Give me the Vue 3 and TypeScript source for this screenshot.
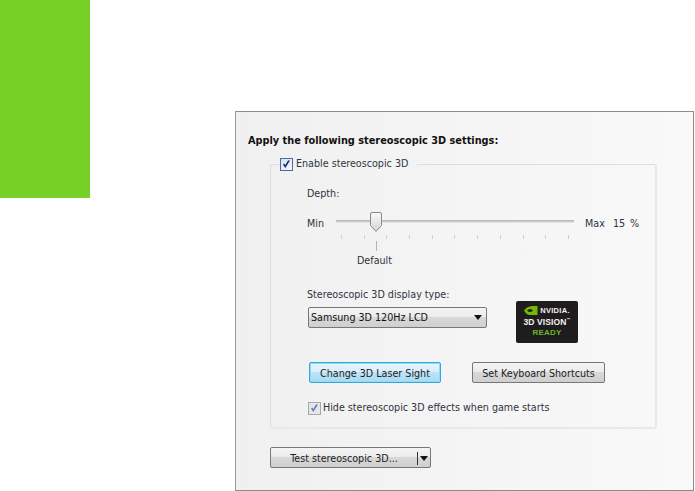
<script setup lang="ts">
const ticks: number[] = Array.from({ length: 11 }, (_, i) => i)
</script>

<template>
  <div class="page">
    <div class="brand"></div>
    <section class="panel">
      <h2 class="title">Apply the following stereoscopic 3D settings:</h2>
      <fieldset class="group">
        <legend class="legend">
          <span class="check"><svg viewBox="0 0 13 13" width="13" height="13"><path d="M3 6.5 L5.3 10 L10 2.6 L8 2.6 L5.2 7.3 L4.4 5.6 Z" fill="#14286e" /></svg></span>
          <span>Enable stereoscopic 3D</span>
        </legend>
        <div class="depth-label">Depth:</div>
        <div class="slider-row">
          <span class="min">Min</span>
          <div class="slider">
            <div class="track"></div>
            <svg class="thumb" viewBox="0 0 12 20" width="12" height="20">
              <defs>
                <linearGradient id="thumbFill" x1="0" y1="0" x2="0" y2="1">
                  <stop offset="0" stop-color="#fafafa" />
                  <stop offset="1" stop-color="#d4d4d4" />
                </linearGradient>
              </defs>
              <path d="M2 .5 H10 Q11.5 .5 11.5 2 V13.5 L6 19.5 L.5 13.5 V2 Q.5 .5 2 .5 Z" fill="url(#thumbFill)" stroke="#8a8a8a" />
            </svg>
            <div class="ticks">
              <i v-for="t in ticks" :key="t" class="tick"></i>
            </div>
            <div class="default-tick"></div>
            <div class="default-label">Default</div>
          </div>
          <span class="max">Max</span>
          <span class="value">15</span>
          <span class="unit">%</span>
        </div>
        <div class="display-row">
          <div class="display-col">
            <div class="display-label">Stereoscopic 3D display type:</div>
            <div class="select">
              <span>Samsung 3D 120Hz LCD</span>
              <i class="arrow"></i>
            </div>
          </div>
          <div class="logo">
            <div class="logo-top">
              <svg viewBox="0 0 14 9" width="14" height="9"><path d="M0 4.5 C3 .5 7 -.5 13.5 0 V9 H6 C3 9 1.5 7 0 4.5 Z" fill="#76b900" /><path d="M3 4.5 C5 2.5 7 2.5 9 4.5 C7 6.5 5 6.5 3 4.5 Z" fill="#1f1c1d" /></svg>
              <span>NVIDIA.</span>
            </div>
            <div class="logo-mid">3D VISION<sup>™</sup></div>
            <div class="logo-ready">READY</div>
          </div>
        </div>
        <div class="button-row">
          <button class="btn btn-focus">Change 3D Laser Sight</button>
          <button class="btn btn-keys">Set Keyboard Shortcuts</button>
        </div>
        <div class="hide-row">
          <span class="check check-off"><svg viewBox="0 0 13 13" width="13" height="13"><path d="M3 6.5 L5.3 10 L10 2.6 L8 2.6 L5.2 7.3 L4.4 5.6 Z" fill="#5f78c0" /></svg></span>
          <span>Hide stereoscopic 3D effects when game starts</span>
        </div>
      </fieldset>
      <button class="btn split">
        <span class="split-label">Test stereoscopic 3D...</span>
        <span class="split-sep"></span>
        <i class="arrow"></i>
      </button>
    </section>
  </div>
</template>

<style scoped>
.page {
  width: 695px;
  height: 491px;
  display: flex;
  align-items: flex-start;
  background: #fff;
  font-family: "DejaVu Sans Condensed", "DejaVu Sans", sans-serif;
  font-stretch: condensed;
  font-size: 10.65px;
  color: #2f3340;
  overflow: hidden;
}
.brand {
  width: 90px;
  height: 198px;
  flex: none;
  background: #76d126;
}
.panel {
  flex: none;
  box-sizing: border-box;
  width: 459px;
  height: 380px;
  margin: 111px 0 0 145px;
  padding: 21px 0 0 12px;
  border: 1px solid #8c8c8c;
  border-left-color: #9a9a9a;
  background: linear-gradient(90deg, #f0f0f0, #f9f9f9);
}
.title {
  margin: 0;
  font-size: 10.85px;
  line-height: 15px;
  font-weight: 700;
  color: #111;
}
.group {
  box-sizing: border-box;
  width: 387px;
  height: 272px;
  margin: 9px 0 0 22px;
  padding: 0 0 0 36px;
  border: 1px solid #d6e0e6;
  border-right: 2px solid #e4e9ed;
  border-bottom: 2px solid #e4e9ed;
  border-radius: 3px;
  min-width: 0;
}
.legend {
  display: flex;
  align-items: center;
  gap: 3px;
  margin-left: -27px;
  padding: 0 9px 0 0;
  line-height: 14px;
}
.check {
  box-sizing: border-box;
  width: 13px;
  height: 13px;
  flex: none;
  border: 1px solid #4a6c9c;
  background: linear-gradient(135deg, #d6e2f2, #f6f9fd);
  display: block;
  position: relative;
}
.check svg {
  position: absolute;
  left: -1px;
  top: -1px;
}
.check-off {
  margin-left: 1px;
  border-color: #a9a9a9;
  background: #e6e6e6;
}
.depth-label {
  margin-top: 16px;
  line-height: 14px;
}
.slider-row {
  display: flex;
  align-items: flex-start;
  margin-top: 16px;
  line-height: 14px;
  height: 60px;
}
.min {
  width: 29px;
  flex: none;
}
.slider {
  position: relative;
  width: 238px;
  flex: none;
  height: 60px;
}
.track {
  margin-top: 3px;
  background: #c9c9c9;
  border-top: 1px solid #bcbcbc;
  border-bottom: 1px solid #e4e4e4;
  box-sizing: border-box;
  height: 3px;
}
.thumb {
  position: absolute;
  left: 34px;
  top: -5px;
}
.ticks {
  display: flex;
  justify-content: space-between;
  margin: 12px 5px 0 5px;
  height: 4px;
}
.tick {
  width: 1px;
  height: 4px;
  background: #cfcfcf;
}
.default-tick {
  width: 1px;
  height: 10px;
  margin: 2px 0 0 40px;
  background: #b4b4b4;
}
.default-label {
  position: absolute;
  left: 21px;
  top: 37px;
}
.max {
  margin-left: 11px;
  width: 28px;
  flex: none;
}
.value {
  width: 17px;
  flex: none;
}
.display-row {
  display: flex;
  align-items: flex-start;
  margin-top: 11px;
  padding-left: 1px;
}
.display-col {
  width: 208px;
  flex: none;
}
.display-label {
  margin-left: -1px;
  line-height: 14px;
}
.select {
  box-sizing: border-box;
  width: 179px;
  height: 21px;
  margin-top: 5px;
  padding: 0 4px 0 2px;
  border: 1px solid #777;
  border-radius: 2px;
  background: linear-gradient(#f4f4f4, #ececec 45%, #d8d8d8 50%, #cfcfcf);
  display: flex;
  align-items: center;
  justify-content: space-between;
  color: #111;
}
.arrow {
  width: 0;
  height: 0;
  border: 4px solid transparent;
  border-top: 5px solid #111;
  border-bottom: 0;
}
.logo {
  box-sizing: border-box;
  width: 62px;
  height: 42px;
  margin-top: 13px;
  background: #1f1c1d;
  border-radius: 2px;
  color: #f2f2f2;
  text-align: center;
  font-family: "Liberation Sans", sans-serif;
  font-stretch: normal;
  font-weight: 700;
  padding-top: 4px;
}
.logo-top {
  display: flex;
  align-items: center;
  justify-content: center;
  gap: 2px;
  font-size: 7.5px;
  line-height: 11px;
  letter-spacing: 0.3px;
}
.logo-mid {
  font-size: 8.5px;
  line-height: 12px;
  letter-spacing: 0.1px;
  white-space: nowrap;
}
.logo-mid sup {
  font-size: 4px;
  line-height: 0;
}
.logo-ready {
  font-size: 8px;
  line-height: 10px;
  color: #6fb52f;
  letter-spacing: 0.2px;
}
.button-row {
  display: flex;
  margin-top: 19px;
  margin-left: 2px;
}
.btn {
  box-sizing: border-box;
  height: 21px;
  padding: 1px 0 0;
  font: inherit;
  font-stretch: condensed;
  color: #222;
  border: 1px solid #777;
  border-radius: 2px;
  background: linear-gradient(#f4f4f4, #ececec 45%, #d8d8d8 50%, #cfcfcf);
}
.btn-focus {
  width: 132px;
  border-color: #3aa6d8;
  box-shadow: inset 0 0 0 1px #8fdcf7;
  background: linear-gradient(#e8f5fb, #d8eefa 45%, #bde3f7 50%, #a9d9f3);
}
.btn-keys {
  width: 133px;
  margin-left: 31px;
}
.hide-row {
  display: flex;
  align-items: center;
  gap: 2px;
  margin-top: 18px;
  line-height: 14px;
}
.split {
  display: flex;
  align-items: center;
  width: 161px;
  margin: 18px 0 0 22px;
}
.split-label {
  width: 146px;
  flex: none;
  text-align: center;
}
.split-sep {
  width: 1px;
  height: 13px;
  margin-right: 2px;
  background: #333;
}
</style>
